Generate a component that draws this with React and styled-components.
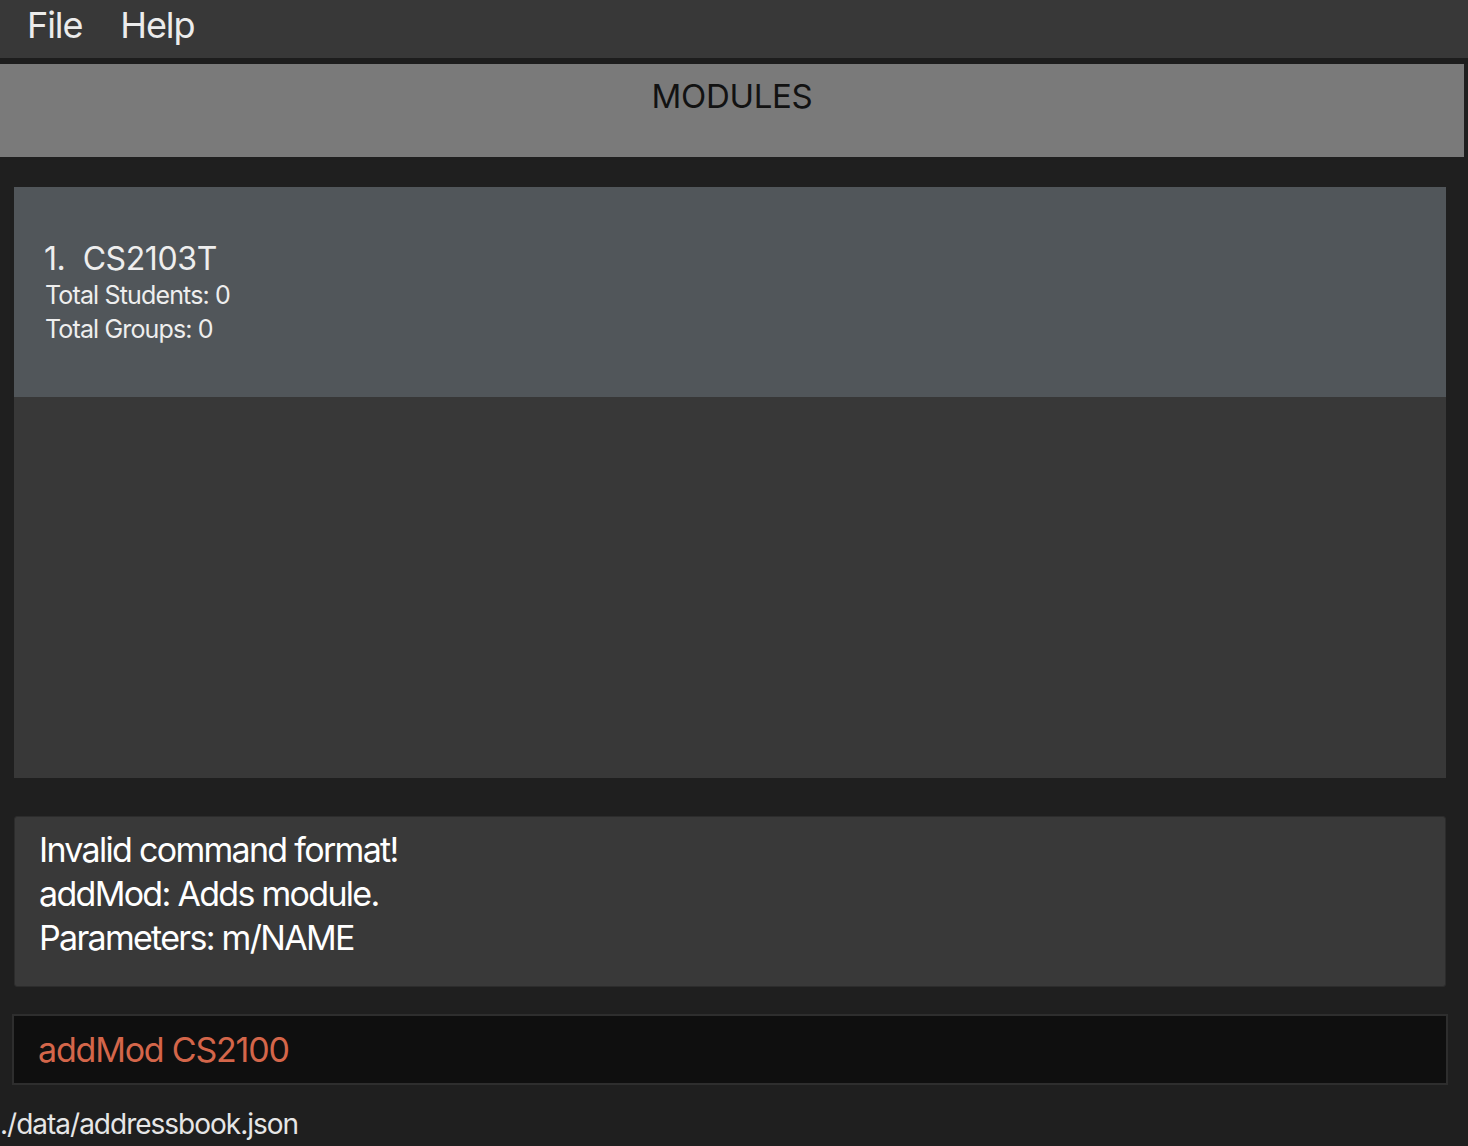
import React from 'react';
import styled, { createGlobalStyle } from 'styled-components';

const GlobalStyle = createGlobalStyle`
  html, body {
    margin: 0;
    padding: 0;
    background: #1f1f1f;
    font-family: Inter, "Noto Sans", sans-serif;
  }
  * { box-sizing: border-box; }
`;

const modules = [
    { code: 'CS2103T', students: 0, groups: 0 },
];

const Window = styled.div`
    width: 1468px;
    height: 1146px;
    display: flex;
    flex-direction: column;
    background: #1f1f1f;
    overflow: hidden;
`;

const MenuBar = styled.div`
    height: 58px;
    background: #383838;
    display: flex;
    align-items: center;
    padding-left: 27px;
    gap: 38px;
    border-bottom: 6px solid #1d1d1d;
    box-sizing: content-box;
`;

const MenuItem = styled.span`
    color: #ececec;
    font-size: 36px;
    letter-spacing: -1.1px;
    margin-top: -8px;
`;

const Header = styled.div`
    height: 93px;
    margin-right: 4px;
    background: #7a7a7a;
    display: flex;
    justify-content: center;
    padding-top: 12px;
    color: #121212;
    font-size: 33px;
    letter-spacing: -0.3px;
`;

const ListPanel = styled.div`
    margin: 30px 22px 0 14px;
    height: 591px;
    background: #383838;
`;

const Card = styled.div`
    height: 210px;
    background: #51565a;
    padding: 53px 0 0 30px;
    color: #eeeeee;
`;

const CardTitle = styled.div`
    font-size: 32px;
    line-height: 38px;
    letter-spacing: -0.4px;
    white-space: pre;
`;

const CardLine = styled.div`
    font-size: 25px;
    line-height: 34px;
    letter-spacing: -0.85px;
    padding-left: 1px;
`;

const ResultBox = styled.div`
    margin: 38px 22px 0 14px;
    height: 171px;
    background: #393939;
    border: 1px solid #2c2c2c;
    border-radius: 3px;
    padding: 11px 0 0 24px;
    color: #ffffff;
    font-size: 34px;
    line-height: 44px;
    letter-spacing: -1.7px;
`;

const CommandBox = styled.div`
    margin: 27px 20px 0 12px;
    height: 71px;
    background: #0f0f0f;
    border: 2px solid #2e2e2e;
    display: flex;
    align-items: center;
    padding-left: 24px;
    color: #d4664a;
    font-size: 34px;
    letter-spacing: -1.2px;
`;

const StatusBar = styled.div`
    margin-top: 22px;
    color: #e6e6e6;
    font-size: 28px;
    letter-spacing: -1px;
`;

const App = () => {
    return (
        <>
            <GlobalStyle />
            <Window>
                <MenuBar>
                    <MenuItem>File</MenuItem>
                    <MenuItem>Help</MenuItem>
                </MenuBar>
                <Header>MODULES</Header>
                <ListPanel>
                    {modules.map((m, i) => (
                        <Card key={m.code}>
                            <CardTitle>{`${i + 1}.  ${m.code}`}</CardTitle>
                            <CardLine>Total Students: {m.students}</CardLine>
                            <CardLine>Total Groups: {m.groups}</CardLine>
                        </Card>
                    ))}
                </ListPanel>
                <ResultBox>
                    <div>Invalid command format!</div>
                    <div>addMod: Adds module.</div>
                    <div>Parameters: m/NAME</div>
                </ResultBox>
                <CommandBox>addMod CS2100</CommandBox>
                <StatusBar>./data/addressbook.json</StatusBar>
            </Window>
        </>
    );
};

export default App;
